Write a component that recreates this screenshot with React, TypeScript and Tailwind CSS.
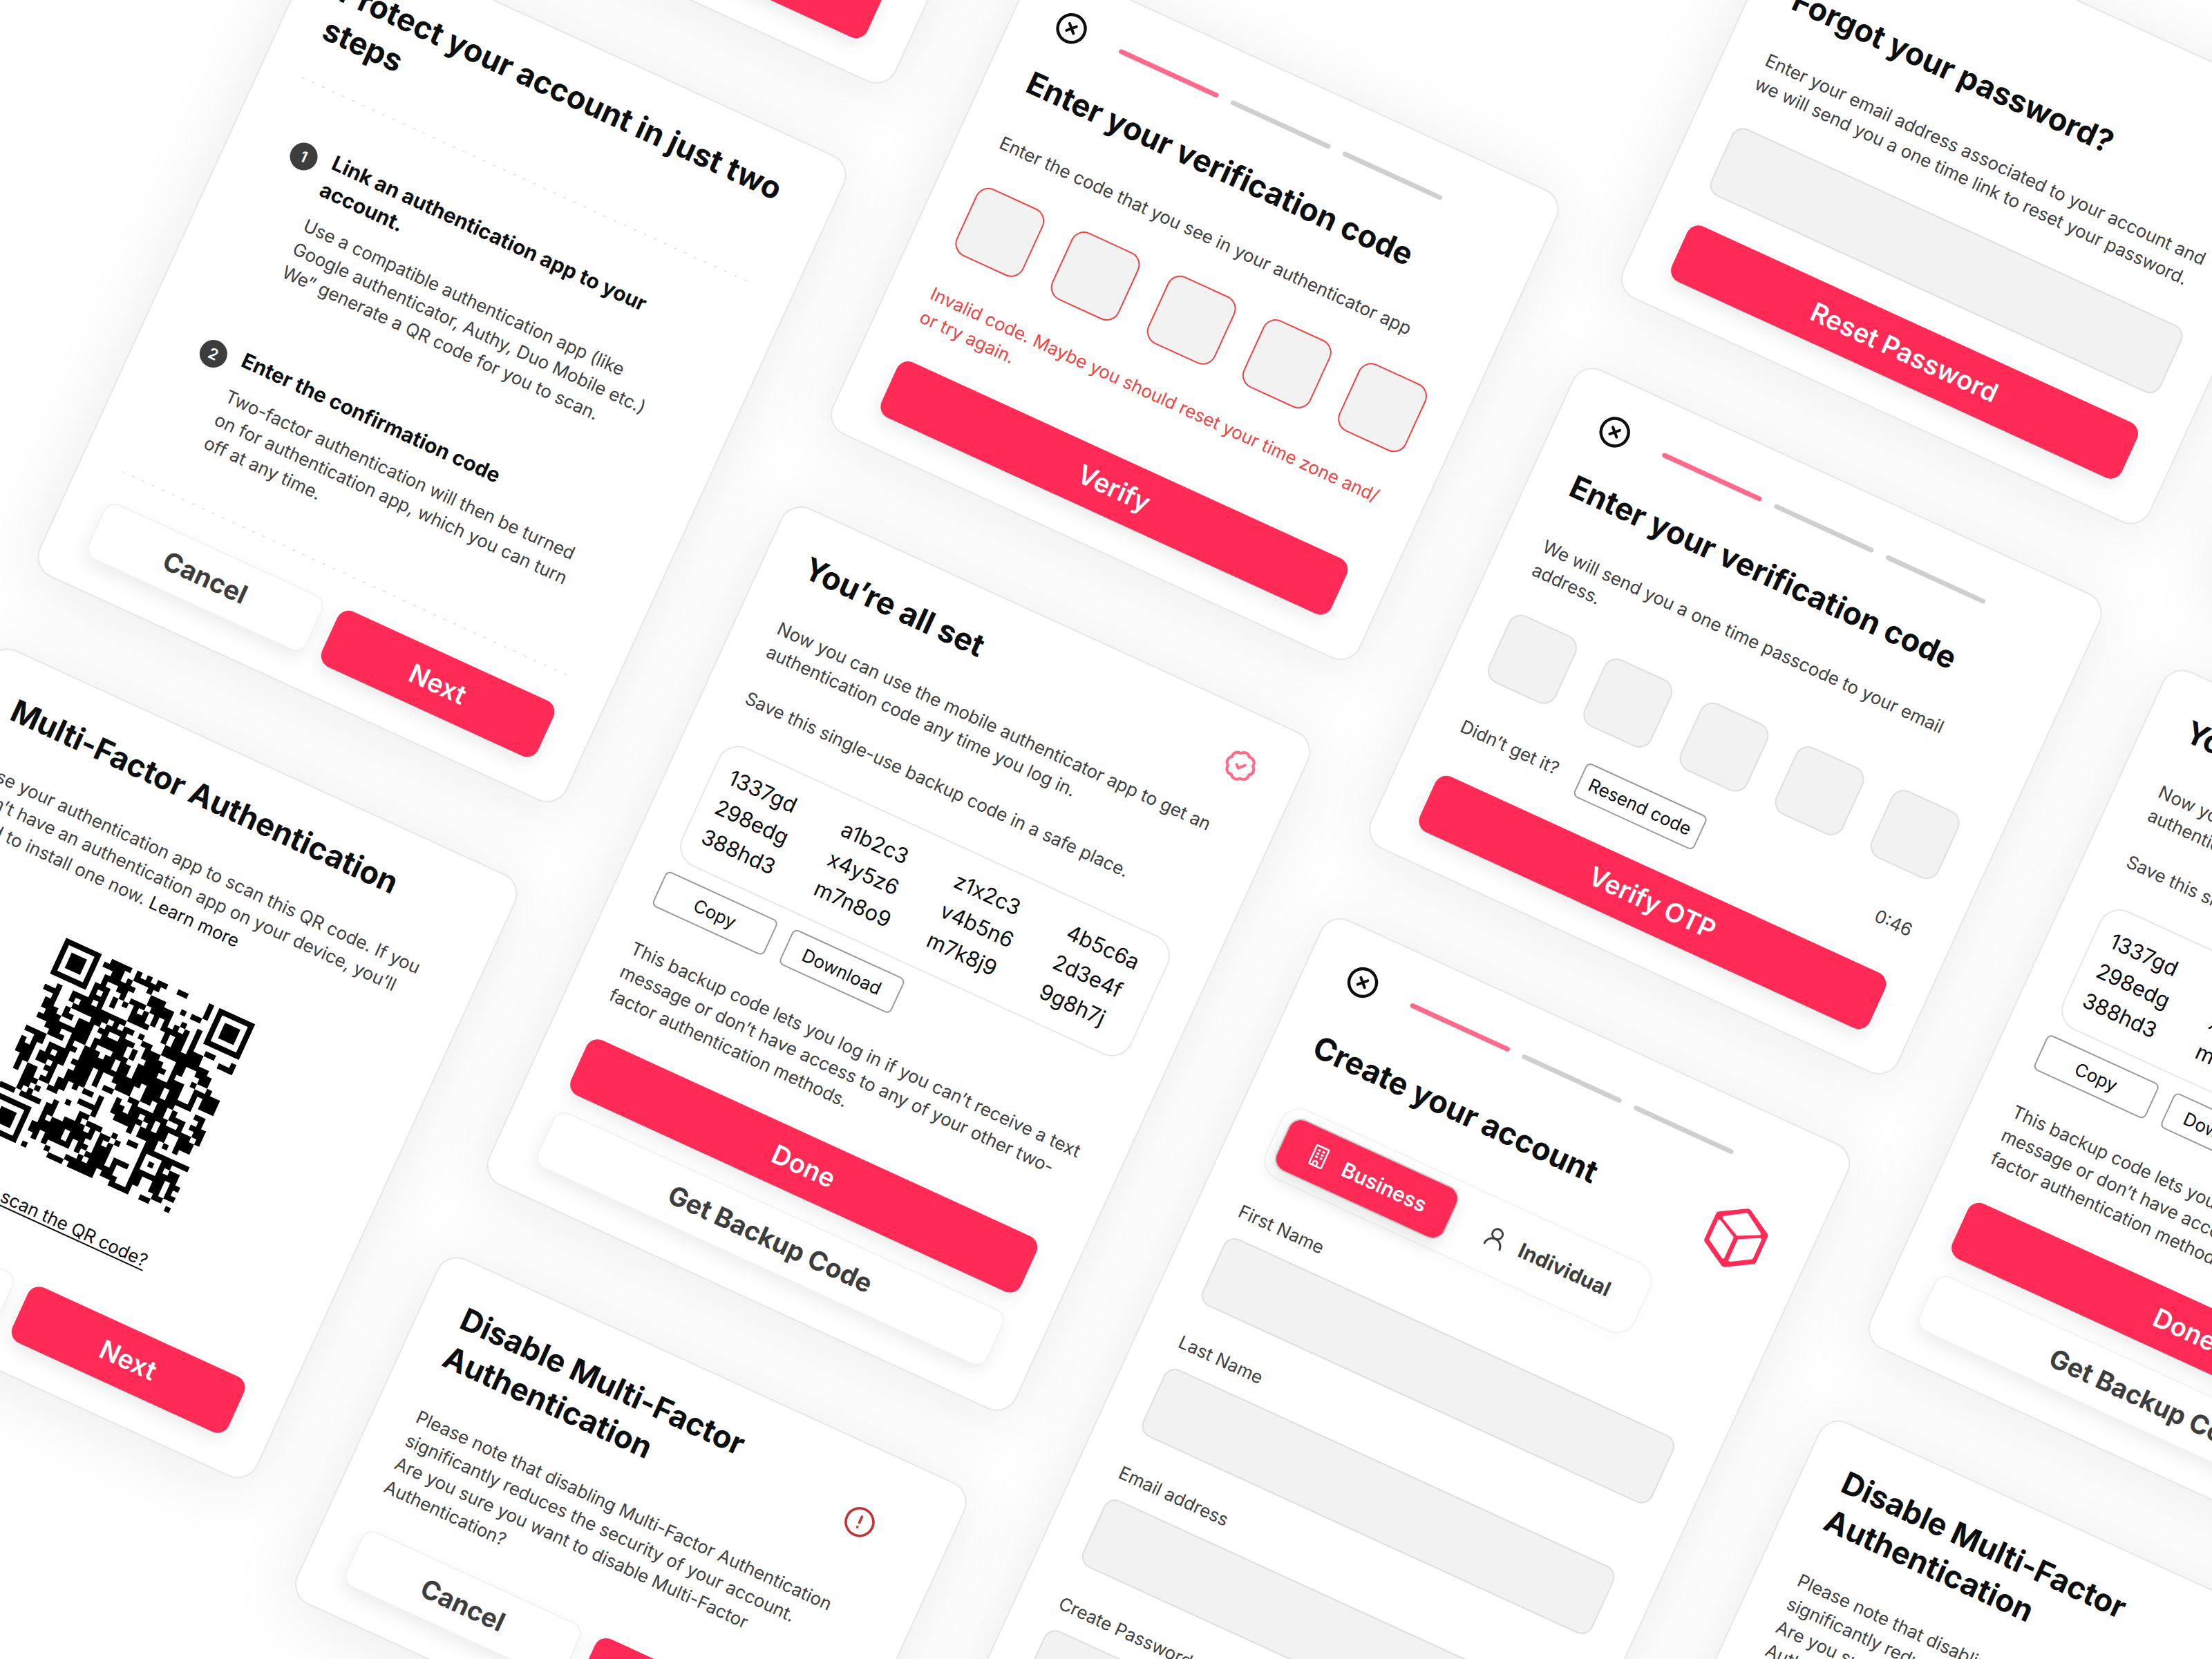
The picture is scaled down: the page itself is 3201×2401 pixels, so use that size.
import { useId, type ReactNode } from "react";
import { UserRound } from "lucide-react";

/* ---------- shared pieces ---------- */

function Card({ children, className = "" }: { children: ReactNode; className?: string }) {
  return (
    <section
      className={
        "relative rounded-[32px] border-2 border-[#e7e7e7] bg-white px-[60px] py-[47px] before:absolute before:inset-0 before:-z-10 before:rounded-[32px] before:shadow-[0_10px_100px_8px_rgba(0,0,0,0.075)] before:content-[''] " +
        className
      }
    >
      {children}
    </section>
  );
}

function Title({ children }: { children: ReactNode }) {
  return <h2 className="whitespace-nowrap text-[45px] font-bold leading-[60px] text-[#0d0e10]">{children}</h2>;
}

function Text({ children, className = "" }: { children: ReactNode; className?: string }) {
  return (
    <p className={"whitespace-nowrap text-[26px] leading-[37px] text-[#404040] " + className}>{children}</p>
  );
}

function PrimaryButton({ children, className = "w-full" }: { children: ReactNode; className?: string }) {
  return (
    <button
      type="button"
      className={
        "h-[88px] rounded-[18px] bg-[#ff2a55] text-[38px] font-semibold text-white shadow-[0_10px_24px_rgba(0,0,0,0.08)] " +
        className
      }
    >
      {children}
    </button>
  );
}

function PlainButton({ children, className = "w-full" }: { children: ReactNode; className?: string }) {
  return (
    <button
      type="button"
      className={
        "h-[88px] rounded-[18px] border-2 border-[#f2f2f2] bg-white text-[38px] font-bold text-[#3d3d3d] shadow-[0_10px_24px_rgba(0,0,0,0.07)] " +
        className
      }
    >
      {children}
    </button>
  );
}

function SmallButton({ children, className = "" }: { children: ReactNode; className?: string }) {
  return (
    <button
      type="button"
      className={"rounded-lg border-2 border-[#9b9b9b] bg-white text-[26px] text-[#0d0e10] " + className}
    >
      {children}
    </button>
  );
}

function CloseButton() {
  return (
    <button type="button" aria-label="Close" className="size-[50px]">
      <svg viewBox="0 0 50 50" className="size-[50px]" fill="none" stroke="#0d0e10" strokeLinecap="round" aria-hidden="true">
        <circle cx="25" cy="25" r="20" strokeWidth="4.4" />
        <path d="M19.5 19.5 30.5 30.5M30.5 19.5 19.5 30.5" strokeWidth="4" />
      </svg>
    </button>
  );
}

function StepHeader() {
  return (
    <header className="grid grid-cols-[50px_1fr_50px] items-center">
      <CloseButton />
      <div className="flex justify-center gap-5" aria-hidden="true">
        <span className="h-[7px] w-[158px] rounded-full bg-[#ff6a8a]" />
        <span className="h-[7px] w-[158px] rounded-full bg-[#cfcfcf]" />
        <span className="h-[7px] w-[158px] rounded-full bg-[#cfcfcf]" />
      </div>
    </header>
  );
}

function Head({ title, aside }: { title: string; aside?: ReactNode }) {
  return (
    <div className="flex flex-col gap-10">
      <StepHeader />
      <div className="flex items-center justify-between">
        <Title>{title}</Title>
        {aside}
      </div>
    </div>
  );
}

function CodeBoxes({ error = false }: { error?: boolean }) {
  return (
    <div className="flex justify-between">
      {[1, 2, 3, 4, 5].map((n) => (
        <input
          key={n}
          aria-label={"Digit " + n}
          inputMode="numeric"
          maxLength={1}
          className={
            "size-[107px] rounded-[20px] border-2 bg-[#f2f2f2] text-center text-[45px] " +
            (error ? "border-[#ef4444]" : "border-[#dedede]")
          }
        />
      ))}
    </div>
  );
}

function Field({ label, type = "text" }: { label: string; type?: string }) {
  const id = useId();
  return (
    <div className="flex flex-col gap-5">
      <label htmlFor={id} className="text-[26px] leading-[37px] text-[#404040]">
        {label}
      </label>
      <input id={id} type={type} className="h-[107px] w-full rounded-[18px] border-2 border-[#dedede] bg-[#f2f2f2] px-8 text-[26px]" />
    </div>
  );
}

/* ---------- drawings ---------- */

function BadgeIcon() {
  return (
    <svg viewBox="0 0 24 24" className="size-[49px]" fill="none" stroke="#ff6a8a" strokeWidth="2" strokeLinecap="round" strokeLinejoin="round" aria-hidden="true">
      <path d="M3.85 8.62a4 4 0 0 1 4.78-4.77 4 4 0 0 1 6.74 0 4 4 0 0 1 4.78 4.78 4 4 0 0 1 0 6.74 4 4 0 0 1-4.77 4.78 4 4 0 0 1-6.75 0 4 4 0 0 1-4.78-4.77 4 4 0 0 1 0-6.76Z" />
      <path d="m9.2 12.2 2 1.9 3.6-3.8" />
    </svg>
  );
}

function AlertIcon() {
  return (
    <svg viewBox="0 0 50 50" className="mr-[45px] size-[50px]" fill="none" stroke="#c23434" strokeLinecap="round" aria-hidden="true">
      <circle cx="25" cy="25" r="20" strokeWidth="3.6" />
      <path d="M25 16.5v9.5M25 32.8v.2" strokeWidth="3.6" />
    </svg>
  );
}

function CubeLogo() {
  return (
    <svg viewBox="0 0 92 92" className="size-[92px]" aria-hidden="true">
      <path d="M46 5 82 26V66L46 87 10 66V26Z" fill="#ff2a55" stroke="#ff2a55" strokeWidth="10" strokeLinejoin="round" />
      <g fill="#fff" stroke="#fff" strokeWidth="4.4" strokeLinejoin="round">
        <path d="M46 9 74 26.500 46 40.500 18 26.500Z" />
        <path d="M13.500 34 40.500 48V79L13.500 63Z" />
        <path d="M78.500 34 51.500 48V79L78.500 63Z" />
      </g>
    </svg>
  );
}

function BuildingIcon() {
  return (
    <svg viewBox="0 0 36 36" className="size-9" fill="none" stroke="#fff" strokeWidth="2.600" strokeLinejoin="round" aria-hidden="true">
      <rect x="8" y="3" width="19" height="29" rx="1.500" />
      <path d="M13 32v-4a3 3 0 0 1 6 0v4" />
      <path d="M12 9h4M19 9h4M12 14h4M19 14h4M12 19h4M19 19h4" strokeWidth="3" />
    </svg>
  );
}

const QR_SIZE = 37;

function fixedModule(x: number, y: number): boolean | null {
  for (const [ox, oy] of [[0, 0], [QR_SIZE - 7, 0], [0, QR_SIZE - 7]]) {
    const dx = x - ox;
    const dy = y - oy;
    if (dx >= -1 && dx <= 7 && dy >= -1 && dy <= 7) {
      const ring = Math.max(Math.abs(dx - 3), Math.abs(dy - 3));
      return ring === 3 || ring <= 1;
    }
  }
  const ring = Math.max(Math.abs(x - 30), Math.abs(y - 30));
  if (ring <= 2) return ring !== 1;
  if (x === 6 || y === 6) return (x + y) % 2 === 0;
  return null;
}

function qrPath() {
  let seed = 20417;
  let d = "";
  let above: boolean[] = [];
  for (let y = 0; y < QR_SIZE; y++) {
    const row: boolean[] = [];
    for (let x = 0; x < QR_SIZE; x++) {
      seed = (seed * 48271) % 2147483647;
      const chance = 0.34 + (row[x - 1] ? 0.2 : 0) + (above[x] ? 0.2 : 0);
      const on = fixedModule(x, y) ?? seed / 2147483647 < chance;
      row.push(on);
      if (on) d += `M${x} ${y}h1v1h-1z`;
    }
    above = row;
  }
  return d;
}

function QrCode() {
  return (
    <svg viewBox="0 0 37 37" className="size-[301px]" role="img" aria-label="QR code">
      <path d={qrPath()} fill="#000" />
    </svg>
  );
}

/* ---------- cards ---------- */

function VerifyErrorCard() {
  return (
    <Card className="flex flex-col gap-12">
      <Head title="Enter your verification code" />
      <Text>Enter the code that you see in your authenticator app</Text>
      <CodeBoxes error />
      <Text className="text-[#ef4444]">
        Invalid code. Maybe you should reset your time zone and/
        <br />
        or try again.
      </Text>
      <PrimaryButton>Verify</PrimaryButton>
    </Card>
  );
}

function VerifyOtpCard() {
  return (
    <Card className="flex flex-col gap-12">
      <Head title="Enter your verification code" />
      <Text>
        We will send you a one time passcode to your email
        <br />
        address.
      </Text>
      <CodeBoxes />
      <div className="flex items-center justify-between">
        <div className="flex items-center gap-[34px]">
          <Text>Didn’t get it?</Text>
          <SmallButton className="h-[54px] w-[192px]">Resend code</SmallButton>
        </div>
        <Text>0:46</Text>
      </div>
      <PrimaryButton>Verify OTP</PrimaryButton>
    </Card>
  );
}

function ForgotCard() {
  return (
    <Card className="flex flex-col gap-12">
      <div className="flex flex-col items-start gap-10">
        <CloseButton />
        <Title>Forgot your password?</Title>
      </div>
      <Text>
        Enter your email address associated to your account and
        <br />
        we will send you a one time link to reset your password.
      </Text>
      <input
        type="email"
        aria-label="Email address"
        className="h-[107px] w-full rounded-[18px] border-2 border-[#dedede] bg-[#f2f2f2] px-8 text-[26px]"
      />
      <PrimaryButton>Reset Password</PrimaryButton>
    </Card>
  );
}

const CODES = [
  ["1337gd", "298edg", "388hd3"],
  ["a1b2c3", "x4y5z6", "m7n8o9"],
  ["z1x2c3", "v4b5n6", "m7k8j9"],
  ["4b5c6a", "2d3e4f", "9g8h7j"],
];

function AllSetCard() {
  return (
    <Card className="flex flex-col gap-12">
      <div className="flex items-center justify-between">
        <Title>You’re all set</Title>
        <BadgeIcon />
      </div>
      <Text>
        Now you can use the mobile authenticator app to get an
        <br />
        authentication code any time you log in.
        <br />
        <br />
        Save this single-use backup code in a safe place.
      </Text>
      <div className="flex flex-col gap-5">
        <div className="flex justify-between rounded-[32px] border-2 border-[#e7e7e7] px-6 py-[22px] text-[31px] leading-[47px] text-[#0d0e10] [font-feature-settings:'calt'_0]">
          {CODES.map((column) => (
            <ul key={column[0]} className="w-[126px]">
              {column.map((code) => (
                <li key={code}>{code}</li>
              ))}
            </ul>
          ))}
        </div>
        <div className="flex gap-6">
          <SmallButton className="h-14 w-[178px]">Copy</SmallButton>
          <SmallButton className="h-14 w-[178px]">Download</SmallButton>
        </div>
      </div>
      <Text>
        This backup code lets you log in if you can’t receive a text
        <br />
        message or don’t have access to any of your other two-
        <br />
        factor authentication methods.
      </Text>
      <div className="flex flex-col gap-7">
        <PrimaryButton>Done</PrimaryButton>
        <PlainButton>Get Backup Code</PlainButton>
      </div>
    </Card>
  );
}

function DisableCard() {
  return (
    <Card className="flex flex-col gap-12">
      <div className="flex items-center justify-between">
        <Title>
          Disable Multi-Factor
          <br />
          Authentication
        </Title>
        <AlertIcon />
      </div>
      <Text>
        Please note that disabling Multi-Factor Authentication
        <br />
        significantly reduces the security of your account.
        <br />
        Are you sure you want to disable Multi-Factor
        <br />
        Authentication?
      </Text>
      <div className="flex gap-6">
        <PlainButton className="flex-1">Cancel</PlainButton>
        <PrimaryButton className="flex-1">Disable</PrimaryButton>
      </div>
    </Card>
  );
}

function DottedRule() {
  return (
    <svg className="block h-[2px] w-full" aria-hidden="true">
      <line x1="0" y1="1" x2="100%" y2="1" stroke="#e0e0e0" strokeWidth="2" strokeDasharray="4 12" />
    </svg>
  );
}

function Step({ number, title, children }: { number: number; title: ReactNode; children: ReactNode }) {
  return (
    <li className="flex gap-[22px]">
      <span className="mt-3 flex size-10 shrink-0 items-center justify-center rounded-full bg-[#3d3d3d] text-[22px] font-semibold text-white">
        {number}
      </span>
      <div className="flex flex-col gap-[18px]">
        <h3 className="whitespace-nowrap text-[30px] font-bold leading-[42px] text-[#0d0e10]">{title}</h3>
        <Text>{children}</Text>
      </div>
    </li>
  );
}

function ProtectCard() {
  return (
    <Card className="flex flex-col">
      <Title>
        Protect your account in just two
        <br />
        steps
      </Title>
      <div className="mt-12 flex flex-col">
        <DottedRule />
        <ol className="flex flex-col gap-[101px] px-[30px] py-[70px]">
          <Step
            number={1}
            title={
              <>
                Link an authentication app to your
                <br />
                account.
              </>
            }
          >
            Use a compatible authentication app (like
            <br />
            Google authenticator, Authy, Duo Mobile etc.)
            <br />
            We” generate a QR code for you to scan.
          </Step>
          <Step number={2} title="Enter the confirmation code">
            Two-factor authentication will then be turned
            <br />
            on for authentication app, which you can turn
            <br />
            off at any time.
          </Step>
        </ol>
        <DottedRule />
      </div>
      <div className="mt-11 flex gap-6">
        <PlainButton className="flex-1">Cancel</PlainButton>
        <PrimaryButton className="flex-1">Next</PrimaryButton>
      </div>
    </Card>
  );
}

function QrCard() {
  return (
    <Card className="flex flex-col">
      <Title>Multi-Factor Authentication</Title>
      <Text className="mt-12">
        Use your authentication app to scan this QR code. If you
        <br />
        don’t have an authentication app on your device, you’ll
        <br />
        need to install one now.{" "}
        <a href="#learn-more" className="text-[#0d0e10]">
          Learn more
        </a>
      </Text>
      <div className="mt-20 flex flex-col items-center gap-[58px]">
        <QrCode />
        <a href="#manual-setup" className="text-[26px] leading-[37px] text-[#0d0e10] underline underline-offset-4">
          Can’t scan the QR code?
        </a>
      </div>
      <div className="mt-[78px] flex gap-6">
        <PlainButton className="flex-1">Cancel</PlainButton>
        <PrimaryButton className="flex-1">Next</PrimaryButton>
      </div>
    </Card>
  );
}

function CreateCard() {
  return (
    <Card className="flex flex-col gap-[44px]">
      <Head title="Create your account" aside={<CubeLogo />} />
      <div className="flex gap-[14px] self-start rounded-[30px] border-2 border-[#f3f3f3] p-3 shadow-[0_6px_24px_rgba(0,0,0,0.02)]">
        <button
          type="button"
          aria-pressed="true"
          className="flex h-[82px] w-[269px] items-center justify-center gap-5 rounded-[20px] border-2 border-[#c9c9c9] bg-[#ff2a55] text-[30px] font-semibold text-white shadow-[0_10px_24px_rgba(0,0,0,0.1)]"
        >
          <BuildingIcon />
          Business
        </button>
        <button
          type="button"
          aria-pressed="false"
          className="flex h-[82px] w-[277px] items-center justify-center gap-5 rounded-[20px] text-[30px] font-bold text-[#3d3d3d]"
        >
          <UserRound size={36} strokeWidth={1.9} />
          Individual
        </button>
      </div>
      <Field label="First Name" />
      <Field label="Last Name" />
      <Field label="Email address" type="email" />
      <Field label="Create Password" type="password" />
      <PrimaryButton>Continue</PrimaryButton>
    </Card>
  );
}

/* ---------- board ---------- */

export default function App() {
  return (
    <main className="relative h-screen w-full overflow-hidden bg-white font-['Inter','Liberation_Sans',sans-serif]">
      <div className="absolute left-0 top-0 isolate flex origin-top-left rotate-[24.6deg] items-start gap-[118px] pl-[382px]">
        <div className="-mt-[1178px] flex w-[840px] shrink-0 flex-col gap-[117px]">
          <VerifyOtpCard />
          <ProtectCard />
          <QrCard />
        </div>
        <div className="-mt-[682px] flex w-[840px] shrink-0 flex-col gap-[117px]">
          <VerifyErrorCard />
          <AllSetCard />
          <DisableCard />
        </div>
        <div className="-mt-[1252px] flex w-[840px] shrink-0 flex-col gap-[113px]">
          <ForgotCard />
          <VerifyOtpCard />
          <CreateCard />
        </div>
        <div className="-mt-[1299px] flex w-[840px] shrink-0 flex-col gap-[117px]">
          <VerifyErrorCard />
          <AllSetCard />
          <DisableCard />
        </div>
      </div>
    </main>
  );
}
